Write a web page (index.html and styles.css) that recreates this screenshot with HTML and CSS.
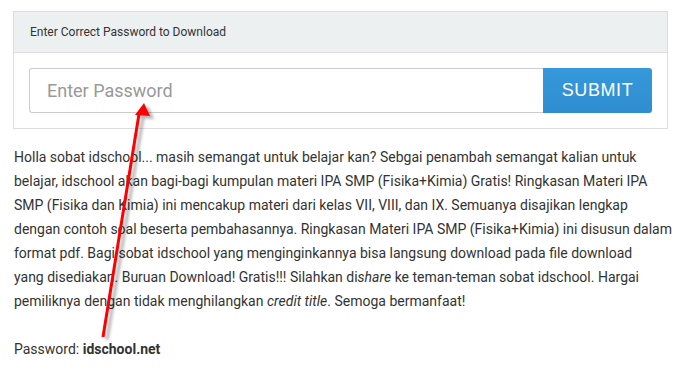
FILE: index.html
```html
<!DOCTYPE html>
<html lang="id">
<head>
    <meta charset="UTF-8">
    <meta name="viewport" content="width=device-width, initial-scale=1.0">
    <title>Download Materi IPA SMP</title>
    <link rel="stylesheet" href="styles.css">
</head>
<body>
    <div class="page">
        <div class="locker">
            <div class="locker-head">Enter Correct Password to Download</div>
            <form class="locker-body">
                <input type="password" class="locker-input" placeholder="Enter Password">
                <button type="submit" class="locker-btn">SUBMIT</button>
            </form>
        </div>

        <div class="post">
            <p>Holla sobat idschool... masih semangat untuk belajar kan? Sebgai penambah semangat kalian untuk<br>
            belajar, idschool akan bagi-bagi kumpulan materi IPA SMP (Fisika+Kimia) Gratis! Ringkasan Materi IPA<br>
            SMP (Fisika dan Kimia) ini mencakup materi dari kelas VII, VIII, dan IX. Semuanya disajikan lengkap<br>
            dengan contoh soal beserta pembahasannya. Ringkasan Materi IPA SMP (Fisika+Kimia) ini disusun dalam<br>
            format pdf. Bagi sobat idschool yang menginginkannya bisa langsung download pada file download<br>
            yang disediakan. Buruan Download! Gratis!!! Silahkan di<em>share</em> ke teman-teman sobat idschool. Hargai<br>
            pemiliknya dengan tidak menghilangkan <em>credit title</em>. Semoga bermanfaat!</p>
            <p>Password: <strong>idschool.net</strong></p>
        </div>
    </div>

    <!-- annotation arrow drawn over the screenshot -->
    <svg class="arrow" width="682" height="375" viewBox="0 0 682 375">
        <defs>
            <filter id="blur" x="-50%" y="-10%" width="200%" height="120%">
                <feGaussianBlur stdDeviation="1.6"/>
            </filter>
        </defs>
        <g transform="translate(4 3)" fill="#000" stroke="#000" opacity="0.3" filter="url(#blur)">
            <line x1="103" y1="337" x2="139" y2="114" stroke-width="3"/>
            <polygon points="144,103 150,116 135,115" stroke="none"/>
        </g>
        <line x1="103" y1="337" x2="139" y2="114" stroke="#f00" stroke-width="3"/>
        <polygon points="144,103 150,116 135,115" fill="#f00"/>
    </svg>
</body>
</html>
```

FILE: styles.css
```css
body {
    margin: 0;
    padding: 0;
    background-color: #fff;
    color: #333;
    font-family: Roboto, "Liberation Sans", sans-serif;
}

.page {
    padding: 11px 0 0 13px;
}

.locker {
    width: 653px;
    border: 1px solid #ddd;
}

.locker-head {
    height: 40px;
    line-height: 40px;
    padding-left: 16px;
    background-color: #ecf0f1;
    border-bottom: 1px solid #ddd;
    font-size: 12px;
    color: #333;
}

.locker-body {
    display: flex;
    margin: 0;
    padding: 15px;
}

.locker-input {
    flex: 1;
    height: 45px;
    box-sizing: border-box;
    margin: 0;
    padding: 0 17px;
    border: 1px solid #ccc;
    border-right: none;
    border-radius: 3px 0 0 3px;
    font-family: Roboto, sans-serif;
    font-size: 18px;
    color: #555;
    outline: none;
}

.locker-input::placeholder {
    color: #999;
}

.locker-btn {
    width: 109px;
    height: 45px;
    margin: 0;
    border: none;
    border-radius: 0 3px 3px 0;
    background: linear-gradient(#3599dc, #2f8dcf);
    color: #fff;
    font-family: "Liberation Sans", Arial, sans-serif;
    font-size: 18px;
    letter-spacing: 0.6px;
    cursor: pointer;
}

.post {
    width: 662px;
    padding: 16px 0 0 1px;
    font-size: 14px;
    line-height: 24px;
}

.post p {
    margin: 0 0 24px;
}

.post strong {
    font-weight: bold;
}

.arrow {
    position: absolute;
    top: 0;
    left: 0;
    pointer-events: none;
}
```
